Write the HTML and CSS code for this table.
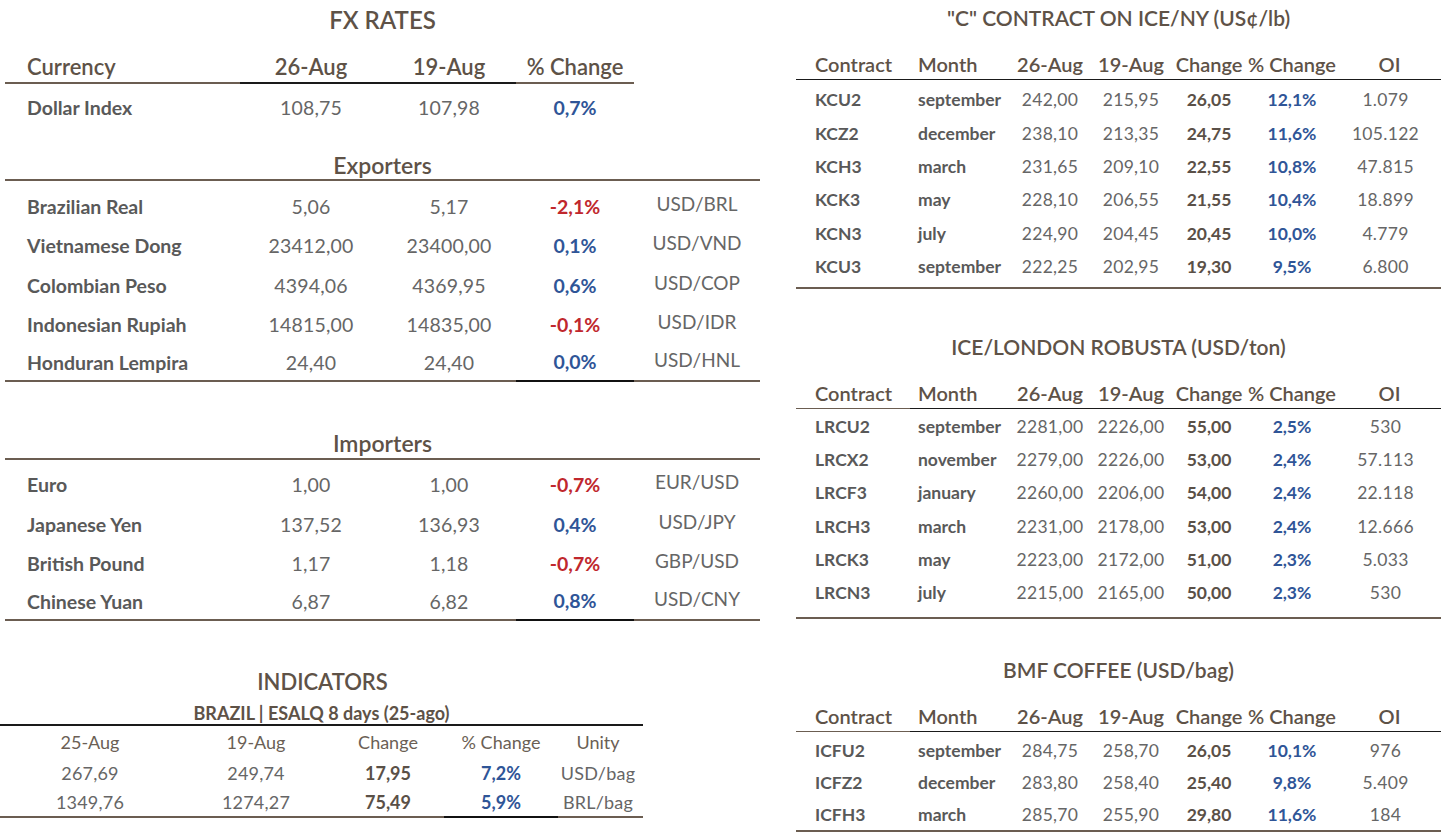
FILE: index.html
```html
<!DOCTYPE html>
<html lang="en">
<head>
<meta charset="utf-8">
<title>Market Report</title>
<link rel="stylesheet" href="styles.css">
</head>
<body>
<div class="page">
  <section class="left">
    <div class="fx">
      <h2 class="title t-fx">FX RATES</h2>
      <div class="grid fxhead">
        <div class="h lbl b-br">Currency</div>
        <div class="h c b-bk">26-Aug</div>
        <div class="h c b-bk">19-Aug</div>
        <div class="h c b-br">% Change</div>
        <div></div>
      </div>
      <div class="grid fxrow dollar">
        <div class="lbl strong">Dollar Index</div>
        <div class="c num">108,75</div>
        <div class="c num">107,98</div>
        <div class="c pos">0,7%</div>
        <div></div>
      </div>

      <h3 class="title t-exp">Exporters</h3>
      <div class="group">
        <div class="grid fxrow"><div class="lbl strong">Brazilian Real</div><div class="c num">5,06</div><div class="c num">5,17</div><div class="c neg">-2,1%</div><div class="c unit">USD/BRL</div></div>
        <div class="grid fxrow"><div class="lbl strong">Vietnamese Dong</div><div class="c num">23412,00</div><div class="c num">23400,00</div><div class="c pos">0,1%</div><div class="c unit">USD/VND</div></div>
        <div class="grid fxrow"><div class="lbl strong">Colombian Peso</div><div class="c num">4394,06</div><div class="c num">4369,95</div><div class="c pos">0,6%</div><div class="c unit">USD/COP</div></div>
        <div class="grid fxrow"><div class="lbl strong">Indonesian Rupiah</div><div class="c num">14815,00</div><div class="c num">14835,00</div><div class="c neg">-0,1%</div><div class="c unit">USD/IDR</div></div>
        <div class="grid fxrow last"><div class="lbl strong">Honduran Lempira</div><div class="c num">24,40</div><div class="c num">24,40</div><div class="c pos">0,0%</div><div class="c unit">USD/HNL</div></div>
      </div>

      <h3 class="title t-imp">Importers</h3>
      <div class="group imp">
        <div class="grid fxrow"><div class="lbl strong">Euro</div><div class="c num">1,00</div><div class="c num">1,00</div><div class="c neg">-0,7%</div><div class="c unit">EUR/USD</div></div>
        <div class="grid fxrow"><div class="lbl strong">Japanese Yen</div><div class="c num">137,52</div><div class="c num">136,93</div><div class="c pos">0,4%</div><div class="c unit">USD/JPY</div></div>
        <div class="grid fxrow"><div class="lbl strong">British Pound</div><div class="c num">1,17</div><div class="c num">1,18</div><div class="c neg">-0,7%</div><div class="c unit">GBP/USD</div></div>
        <div class="grid fxrow last"><div class="lbl strong">Chinese Yuan</div><div class="c num">6,87</div><div class="c num">6,82</div><div class="c pos">0,8%</div><div class="c unit">USD/CNY</div></div>
      </div>
    </div>

    <div class="ind">
      <h2 class="title t-ind">INDICATORS</h2>
      <div class="subtitle">BRAZIL | ESALQ 8 days (25-ago)</div>
      <div class="igrid ihead">
        <div class="c">25-Aug</div><div class="c">19-Aug</div><div class="c">Change</div><div class="c">% Change</div><div class="c">Unity</div>
      </div>
      <div class="igrid irow">
        <div class="c num">267,69</div><div class="c num">249,74</div><div class="c chg">17,95</div><div class="c pos">7,2%</div><div class="c num">USD/bag</div>
      </div>
      <div class="igrid irow last">
        <div class="c num">1349,76</div><div class="c num">1274,27</div><div class="c chg">75,49</div><div class="c pos">5,9%</div><div class="c num">BRL/bag</div>
      </div>
    </div>
  </section>

  <section class="right">
    <h2 class="title rt t1">"C" CONTRACT ON ICE/NY (US¢/lb)</h2>
    <div class="rgrid rhead">
      <div class="lbl b-bk">Contract</div><div class="mo b-bk">Month</div><div class="c b-bk">26-Aug</div><div class="c b-bk">19-Aug</div><div class="c b-bk">Change</div><div class="c b-bk">% Change</div><div class="c b-bk">OI</div>
    </div>
    <div class="rbody">
      <div class="rgrid rrow"><div class="lbl strong">KCU2</div><div class="mo strong">september</div><div class="c num">242,00</div><div class="c num">215,95</div><div class="c chg">26,05</div><div class="c pos">12,1%</div><div class="c num oi">1.079</div></div>
      <div class="rgrid rrow"><div class="lbl strong">KCZ2</div><div class="mo strong">december</div><div class="c num">238,10</div><div class="c num">213,35</div><div class="c chg">24,75</div><div class="c pos">11,6%</div><div class="c num oi">105.122</div></div>
      <div class="rgrid rrow"><div class="lbl strong">KCH3</div><div class="mo strong">march</div><div class="c num">231,65</div><div class="c num">209,10</div><div class="c chg">22,55</div><div class="c pos">10,8%</div><div class="c num oi">47.815</div></div>
      <div class="rgrid rrow"><div class="lbl strong">KCK3</div><div class="mo strong">may</div><div class="c num">228,10</div><div class="c num">206,55</div><div class="c chg">21,55</div><div class="c pos">10,4%</div><div class="c num oi">18.899</div></div>
      <div class="rgrid rrow"><div class="lbl strong">KCN3</div><div class="mo strong">july</div><div class="c num">224,90</div><div class="c num">204,45</div><div class="c chg">20,45</div><div class="c pos">10,0%</div><div class="c num oi">4.779</div></div>
      <div class="rgrid rrow"><div class="lbl strong">KCU3</div><div class="mo strong">september</div><div class="c num">222,25</div><div class="c num">202,95</div><div class="c chg">19,30</div><div class="c pos">9,5%</div><div class="c num oi">6.800</div></div>
    </div>

    <h2 class="title rt t2">ICE/LONDON ROBUSTA (USD/ton)</h2>
    <div class="rgrid rhead">
      <div class="lbl b-br">Contract</div><div class="mo b-bk">Month</div><div class="c b-bk">26-Aug</div><div class="c b-bk">19-Aug</div><div class="c b-bk">Change</div><div class="c b-bk">% Change</div><div class="c b-bk">OI</div>
    </div>
    <div class="rbody rob">
      <div class="rgrid rrow"><div class="lbl strong">LRCU2</div><div class="mo strong">september</div><div class="c num">2281,00</div><div class="c num">2226,00</div><div class="c chg">55,00</div><div class="c pos">2,5%</div><div class="c num oi">530</div></div>
      <div class="rgrid rrow"><div class="lbl strong">LRCX2</div><div class="mo strong">november</div><div class="c num">2279,00</div><div class="c num">2226,00</div><div class="c chg">53,00</div><div class="c pos">2,4%</div><div class="c num oi">57.113</div></div>
      <div class="rgrid rrow"><div class="lbl strong">LRCF3</div><div class="mo strong">january</div><div class="c num">2260,00</div><div class="c num">2206,00</div><div class="c chg">54,00</div><div class="c pos">2,4%</div><div class="c num oi">22.118</div></div>
      <div class="rgrid rrow"><div class="lbl strong">LRCH3</div><div class="mo strong">march</div><div class="c num">2231,00</div><div class="c num">2178,00</div><div class="c chg">53,00</div><div class="c pos">2,4%</div><div class="c num oi">12.666</div></div>
      <div class="rgrid rrow"><div class="lbl strong">LRCK3</div><div class="mo strong">may</div><div class="c num">2223,00</div><div class="c num">2172,00</div><div class="c chg">51,00</div><div class="c pos">2,3%</div><div class="c num oi">5.033</div></div>
      <div class="rgrid rrow"><div class="lbl strong">LRCN3</div><div class="mo strong">july</div><div class="c num">2215,00</div><div class="c num">2165,00</div><div class="c chg">50,00</div><div class="c pos">2,3%</div><div class="c num oi">530</div></div>
    </div>

    <h2 class="title rt t3">BMF COFFEE (USD/bag)</h2>
    <div class="rgrid rhead">
      <div class="lbl b-br">Contract</div><div class="mo b-bk">Month</div><div class="c b-bk">26-Aug</div><div class="c b-bk">19-Aug</div><div class="c b-bk">Change</div><div class="c b-bk">% Change</div><div class="c b-bk">OI</div>
    </div>
    <div class="rbody bmf">
      <div class="rgrid rrow"><div class="lbl strong">ICFU2</div><div class="mo strong">september</div><div class="c num">284,75</div><div class="c num">258,70</div><div class="c chg">26,05</div><div class="c pos">10,1%</div><div class="c num oi">976</div></div>
      <div class="rgrid rrow"><div class="lbl strong">ICFZ2</div><div class="mo strong">december</div><div class="c num">283,80</div><div class="c num">258,40</div><div class="c chg">25,40</div><div class="c pos">9,8%</div><div class="c num oi">5.409</div></div>
      <div class="rgrid rrow"><div class="lbl strong">ICFH3</div><div class="mo strong">march</div><div class="c num">285,70</div><div class="c num">255,90</div><div class="c chg">29,80</div><div class="c pos">11,6%</div><div class="c num oi">184</div></div>
    </div>
  </section>
</div>
</body>
</html>
```

FILE: styles.css
```css
* { box-sizing: border-box; }
html, body { margin: 0; padding: 0; background: #ffffff; }
body {
  font-family: Lato, "Open Sans", "Liberation Sans", sans-serif;
  color: #5a5a5a;
}
.page {
  display: flex;
  width: 1445px;
  height: 832px;
  overflow: hidden;
}
h2, h3 { margin: 0; font-weight: 600; }

.title {
  color: #5e5247;
  font-size: 23px;
  text-align: center;
  font-weight: 600;
}

/* ---------- LEFT ---------- */
.left { width: 796px; flex: none; }
.fx { margin-left: 5px; width: 755px; }
.t-fx { height: 40px; line-height: 40px; font-size: 24px; }

.grid {
  display: grid;
  grid-template-columns: 235px 142px 134px 118px 126px;
  align-items: center;
}
.c { text-align: center; }
.lbl { padding-left: 22px; }

.fxhead { height: 44px; align-items: stretch; }
.fxhead .h {
  color: #5e5247;
  font-size: 22px;
  font-weight: 600;
  padding-top: 12px;
  line-height: 30px;
}
.b-br { border-bottom: 2px solid #6b5d51; }
.b-bk { border-bottom: 2px solid #1a1a1a; }

.fxrow { height: 39.3px; font-size: 19.5px; }
.dollar { height: 47px; }

.strong { font-weight: 700; color: #595959; }
.num { color: #666666; font-weight: 400; letter-spacing: 0.2px; }
.pos { color: #2f5597; font-weight: 700; }
.neg { color: #c0272d; font-weight: 700; }
.unit { color: #666666; padding-bottom: 6px; font-size: 19px; }
.chg { color: #5a5047; font-weight: 700; }

.t-exp { height: 50px; padding-top: 19px; line-height: 30px; border-bottom: 2px solid #6b5d51; }
.t-imp { height: 78px; padding-top: 46px; line-height: 30px; border-bottom: 2px solid #6b5d51; }

.group { padding-top: 6px; }
.group.imp { padding-top: 5px; }
.group .last { border-bottom: 2px solid #6b5d51; height: 38px; }
.group .last .pos,
.group .last .neg { align-self: stretch; line-height: 36px; border-bottom: 2px solid #111; margin-bottom: -2px; }

/* indicators */
.ind { margin-top: 46px; width: 643px; }
.t-ind { height: 30px; line-height: 30px; font-size: 22px; padding-left: 2px; }
.subtitle {
  height: 29px;
  line-height: 22px;
  padding-top: 5px;
  text-align: center;
  font-size: 18px;
  font-weight: 700;
  color: #5e5247;
  border-bottom: 2px solid #1a1a1a;
}
.igrid {
  display: grid;
  grid-template-columns: 180px 152px 112px 114px 80px;
  align-items: center;
  font-size: 18px;
}
.ihead { height: 32px; color: #6b5f55; }
.irow { height: 30px; }
.irow.last { border-bottom: 2px solid #6b5d51; }
.irow.last .pos { align-self: stretch; line-height: 28px; border-bottom: 2px solid #111; margin-bottom: -2px; }

/* ---------- RIGHT ---------- */
.right { width: 645px; flex: none; }
.rt { height: 36px; line-height: 36px; font-size: 21px; }
.t2 { margin-top: 40px; }
.t3 { margin-top: 33px; }

.rgrid {
  display: grid;
  grid-template-columns: 114px 100px 80px 82px 74px 92px 103px;
  align-items: center;
}
.rgrid .lbl { padding-left: 19px; }
.rgrid .mo { padding-left: 8px; }

.rhead { height: 44px; align-items: stretch; }
.rhead > div {
  color: #5e5247;
  font-size: 20px;
  font-weight: 600;
  padding-top: 14px;
  line-height: 28px;
}
.rhead .b-bk, .rhead .b-br { border-bottom-width: 1.5px; }

.rbody {
  border-bottom: 2px solid #6b5d51;
  padding-top: 3px;
  padding-bottom: 4px;
}
.rbody.rob { padding-top: 0; padding-bottom: 7px; }
.rbody.bmf { padding-top: 2px; padding-bottom: 0; }
.rrow { height: 33.4px; font-size: 17.5px; }
.bmf .rrow { height: 32.8px; }
.bmf .rrow:last-child { height: 31px; }
.rrow .num { letter-spacing: 0.3px; }
.rrow .oi { padding-right: 8px; }
```
